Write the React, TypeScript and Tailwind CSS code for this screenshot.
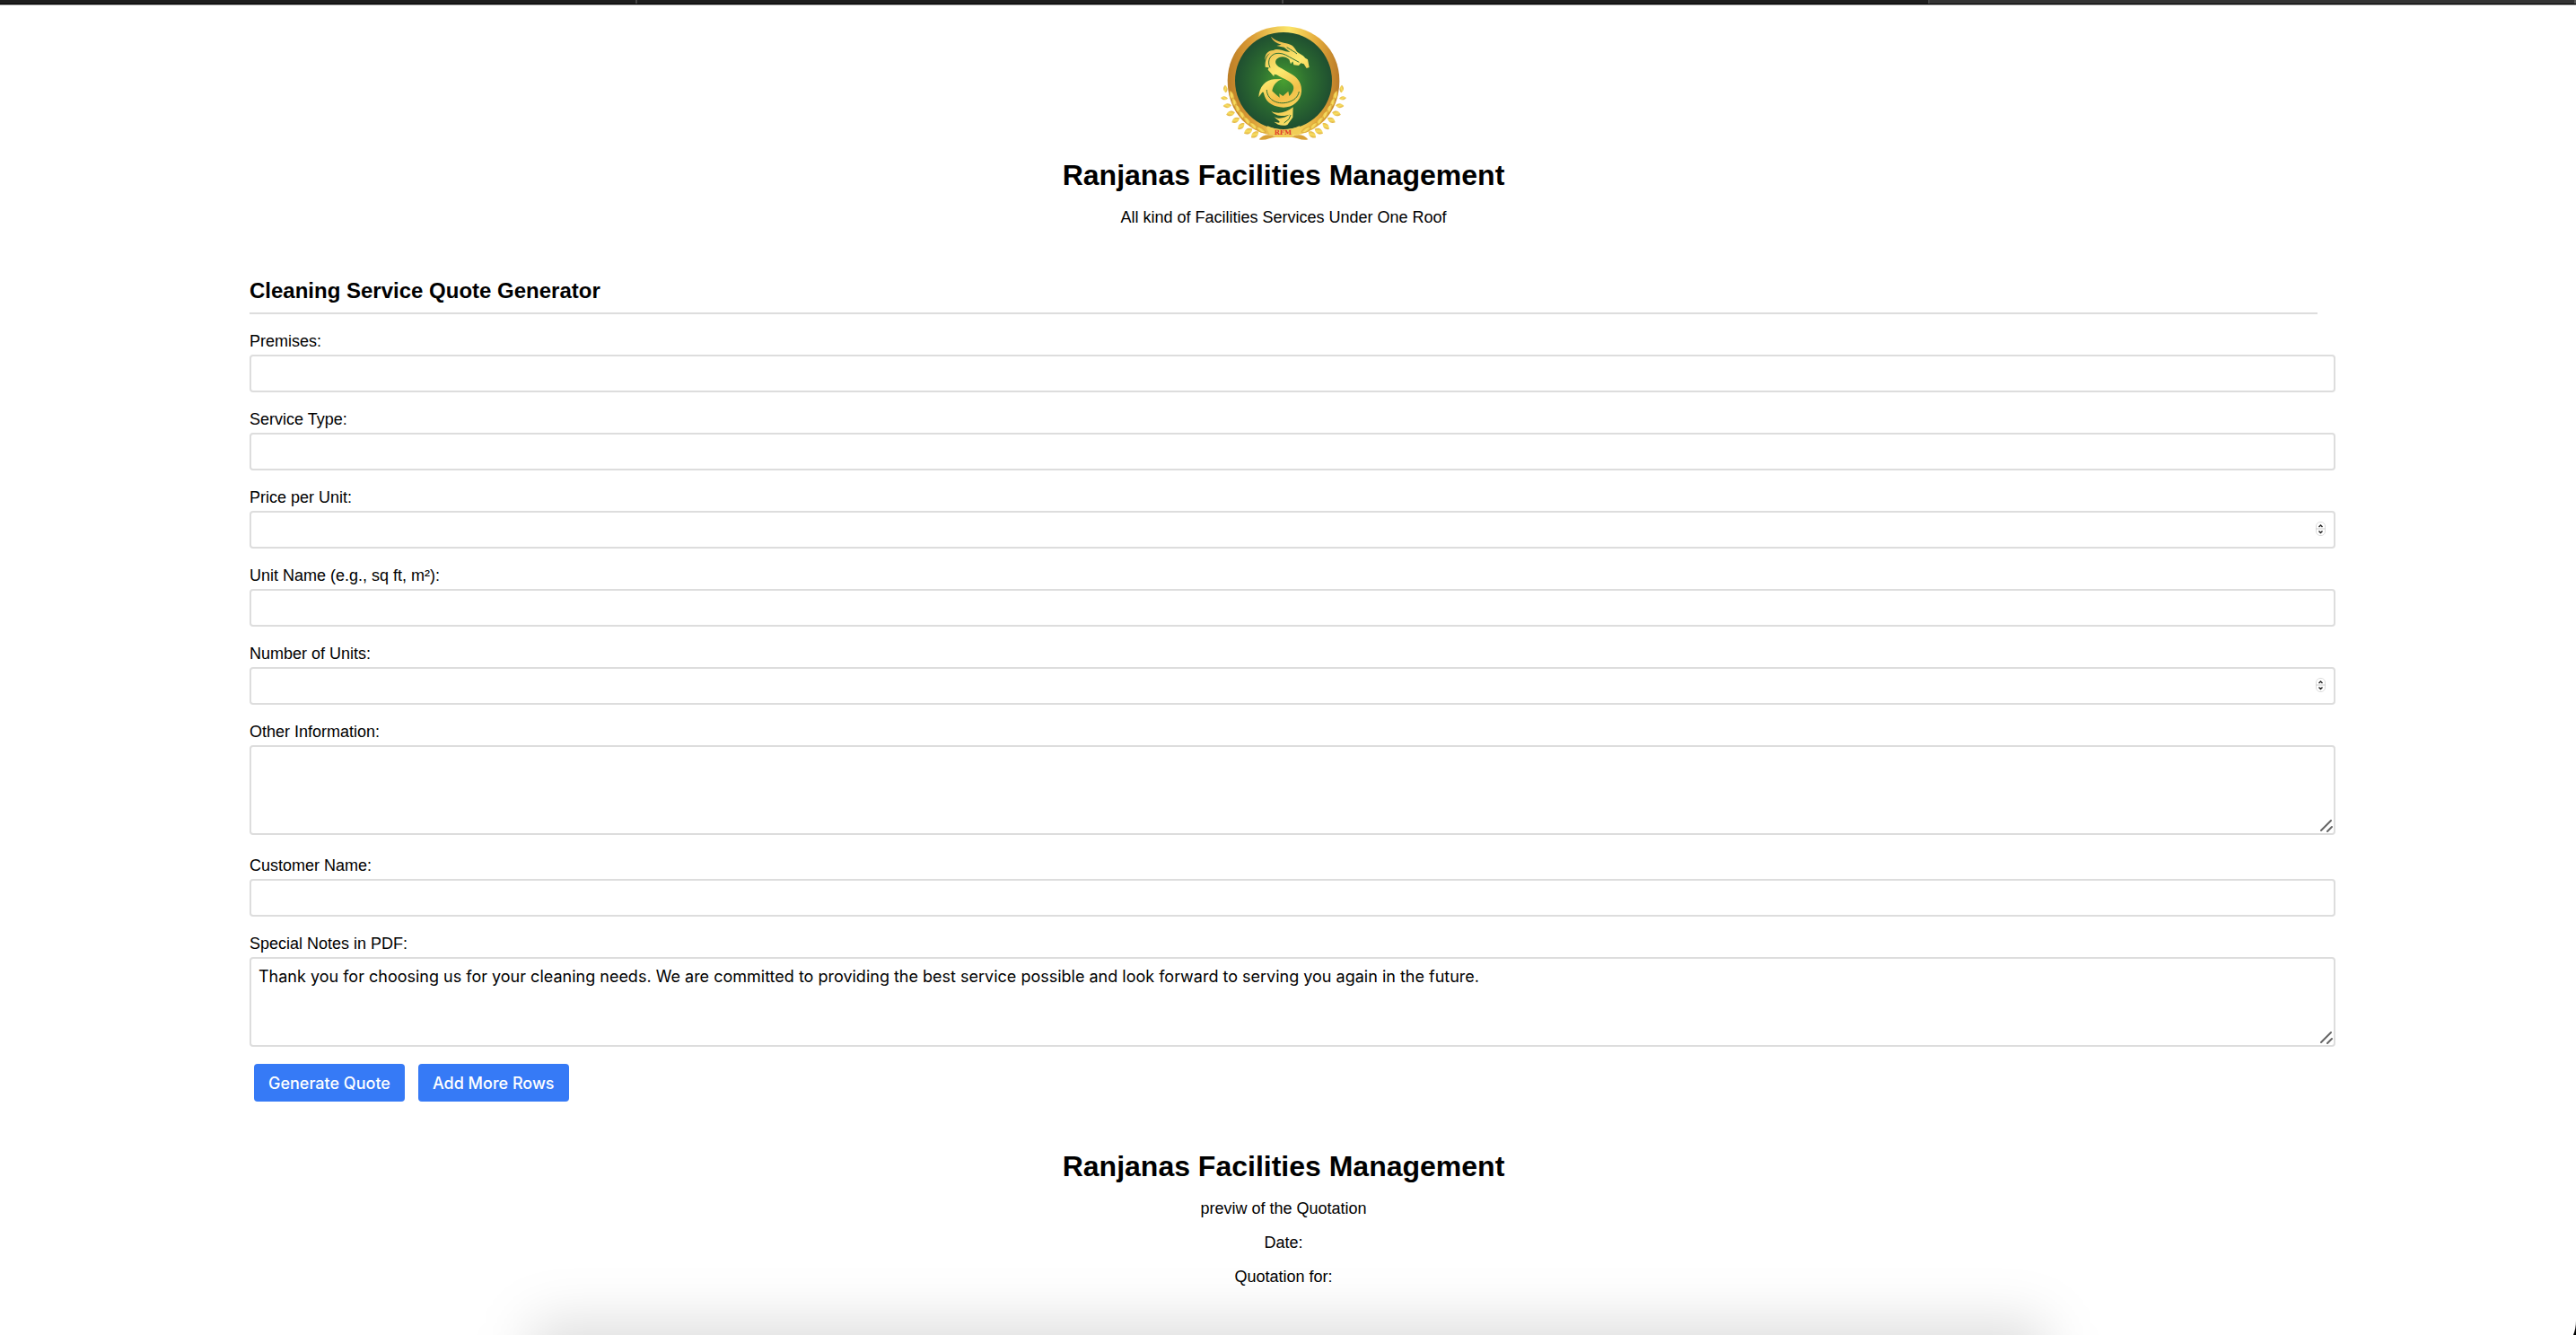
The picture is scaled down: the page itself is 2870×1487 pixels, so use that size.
import React from "react";

const LEAVES: [number, number, number, number][] = [
  [76, 298, 10, -5], [73, 328, 9, -85], [83, 353, 11, -95], [94, 379, 12, -105],
  [111, 401, 12, -120], [129, 421, 12, -135], [153, 438, 13, -120], [175, 449, 13, -130],
];
const INNER: [number, number, number][] = [
  [97, 320, -20], [106, 343, -25], [117, 364, -30], [131, 384, -38], [149, 404, -45], [170, 421, -55], [194, 434, -65],
];

function LaurelHalf() {
  return (
    <g>
      {INNER.map(([x, y, r]) => (
        <path
          key={`${x}-${y}`}
          d="M0 -18C9 -8 9 8 0 18C-9 8 -9 -8 0 -18Z"
          fill="url(#leaf)"
          stroke="#d39a2c"
          strokeWidth="1.5"
          transform={`translate(${x} ${y}) rotate(${r})`}
        />
      ))}
      {LEAVES.map(([x, y, s, r]) => (
        <path
          key={`${x}-${y}`}
          d={`M0 ${-s - 4}C${s} ${-s / 2} ${s - 2} ${s / 2} 0 ${s + 2}C${-s + 2} ${s / 2} ${-s} ${-s / 2} 0 ${-s - 4}Z`}
          fill="url(#leaf)"
          transform={`translate(${x} ${y}) rotate(${r})`}
        />
      ))}
      <path d="M188 466C200 448 225 446 246 458C226 458 208 472 188 466Z" fill="#d9a136" />
    </g>
  );
}

function Logo() {
  return (
    <svg role="img" aria-label="Ranjanas Facilities Management logo" viewBox="60 87 420 387" className="h-[129px] w-[140px]">
      <defs>
        <linearGradient id="ring" x1="0" x2="1" y1="0" y2="0">
          <stop offset="0" stopColor="#bb7d26" />
          <stop offset="0.2" stopColor="#d99a35" />
          <stop offset="0.55" stopColor="#fbe568" />
          <stop offset="0.8" stopColor="#e4ab3b" />
          <stop offset="1" stopColor="#b97a28" />
        </linearGradient>
        <linearGradient id="leaf" x1="0" x2="1" y1="0" y2="1">
          <stop offset="0" stopColor="#d29631" />
          <stop offset="0.5" stopColor="#f8df62" />
          <stop offset="1" stopColor="#d9a035" />
        </linearGradient>
        <linearGradient id="dragon" gradientUnits="userSpaceOnUse" x1="190" y1="130" x2="350" y2="400">
          <stop offset="0" stopColor="#e9a93d" />
          <stop offset="0.4" stopColor="#fcea70" />
          <stop offset="0.65" stopColor="#f2bf48" />
          <stop offset="1" stopColor="#fbe86c" />
        </linearGradient>
        <radialGradient id="field">
          <stop offset="0" stopColor="#489f31" />
          <stop offset="0.5" stopColor="#2e7030" />
          <stop offset="1" stopColor="#1f4f30" />
        </radialGradient>
      </defs>
      <path d="M83 270C83 165 165 88 270 88S457 165 457 270S385 456 270 456S83 375 83 270Z" fill="url(#ring)" />
      <circle cx="270" cy="270" r="162" fill="url(#field)" />
      <LaurelHalf />
      <g transform="translate(540 0) scale(-1 1)">
        <LaurelHalf />
      </g>
      <g fill="url(#dragon)">
        <path d="M228 122C243 138 266 141 287 147C304 152 308 163 316 174L336 187L343 194L351 199L356 225L347 228L338 214L328 211L321 219L304 217L301 205L294 214L289 199C276 186 256 187 246 199C238 210 248 222 264 229L300 250C322 264 332 284 330 306C328 338 300 359 270 359C238 358 214 344 207 322L203 308L199 308L187 325C188 291 210 266 239 265L266 264C247 270 235 285 232 304L244 315L257 326L256 313L268 321L286 305L289 321C302 308 309 292 299 281C287 267 263 261 247 250L239 248L238 256L227 243L218 233L221 226L209 224C208 205 212 188 226 177C215 182 211 190 208 201C207 181 218 168 237 168C245 162 264 166 278 172L292 174L272 158L247 153L263 149C245 144 233 135 228 122Z" />
        <path d="M229 371C250 383 279 376 302 358L301 392L283 417C273 421 263 420 252 416L238 407L254 410C264 408 247 399 238 390C254 400 274 395 292 382C273 391 243 389 229 371Z" />
      </g>
      <g fill="none" stroke="#2b7034" strokeWidth="3">
        <path d="M225 226C212 200 230 176 255 178C272 178 286 189 298 195L322 208" />
        <path d="M281 158C298 169 306 172 315 180" />
        <path d="M214 300C214 328 244 352 284 342C306 335 318 325 322 306" />
        <path d="M294 384L288 398L272 411" />
      </g>
      <path d="M217 421C250 437 290 437 323 421L328 428L315 450L302 448L298 459H242L238 450L224 449L213 429Z" fill="#f1cd58" />
      <text x="268" y="449" textAnchor="middle" fill="#e03a26" className="font-['DejaVu_Serif'] text-[22px] font-bold">RFM</text>
    </svg>
  );
}

function Spinner() {
  return (
    <svg aria-hidden="true" viewBox="0 0 11 16" className="pointer-events-none absolute top-3 right-[11px] h-4 w-[11px]">
      <rect x="0.5" y="0.5" width="10" height="15" rx="4.5" fill="#fff" stroke="#dcdcdc" />
      <path d="M0 8H11" stroke="#cfcfcf" />
      <path d="M3.5 6L5.5 4L7.5 6M3.5 10.5L5.5 12.5L7.5 10.5" fill="none" stroke="#222" strokeWidth="1.4" />
    </svg>
  );
}

function ResizeGrip() {
  return (
    <svg aria-hidden="true" viewBox="0 0 14 14" className="pointer-events-none absolute right-[3px] bottom-[3px] size-[14px]">
      <path d="M1 12L12 1M8 13L13 8" fill="none" stroke="#666" strokeWidth="2" strokeLinecap="round" />
    </svg>
  );
}

type FieldProps = { id: string; label: string; kind?: "text" | "number" | "area"; value?: string };

function Field({ id, label, kind = "text", value }: FieldProps) {
  const box = "block w-full rounded-[4px] border-2 border-[#ddd] bg-white px-2 font-[Inter,sans-serif] text-lg outline-none";
  return (
    <div className={kind === "area" ? "pb-[22px] last:pb-0" : "pb-[18px]"}>
      <label htmlFor={id} className="block pb-[2px] leading-[25px]">{label}</label>
      <div className="relative -mr-5">
        {kind === "area" ? (
          <textarea id={id} defaultValue={value} className={`${box} h-[100px] resize-none py-2 leading-6`} />
        ) : (
          <input
            id={id}
            type={kind}
            className={`${box} h-[42px] [appearance:textfield] [&::-webkit-inner-spin-button]:appearance-none`}
          />
        )}
        {kind === "number" && <Spinner />}
        {kind === "area" && <ResizeGrip />}
      </div>
    </div>
  );
}

function ActionButton({ children }: { children: string }) {
  return (
    <button type="button" className="h-[42px] rounded-[4px] bg-[#367af6] px-4 pt-px font-[Inter,sans-serif] text-lg font-medium text-white">
      {children}
    </button>
  );
}

export default function App() {
  return (
    <div className="relative min-h-screen overflow-hidden bg-white font-['Liberation_Sans',Arial,sans-serif] text-lg text-black">
      <div className="-ml-[10px] flex h-[6px] border-b border-[#aaa] bg-black pb-px">
        <div className="flex-1 border-r-2 border-[#444] bg-[#1e1e1e]" />
        <div className="flex-1 border-r-2 border-[#444] bg-[#1e1e1e]" />
        <div className="flex-1 border-r-2 border-[#444] bg-[#1e1e1e]" />
        <div className="flex-1 border-r-2 border-[#555] bg-[#333]" />
      </div>

      <div className="pr-[288px] pl-[278px]">
        <header className="flex flex-col items-center pt-[23px]">
          <Logo />
          <h1 className="pt-[18px] text-[32px] leading-[38px] font-bold">Ranjanas Facilities Management</h1>
          <p className="pt-4 leading-6">All kind of Facilities Services Under One Roof</p>
        </header>

        <main>
          <h2 className="mt-[56px] border-b-2 border-[#ddd] pb-[10px] text-2xl leading-7 font-bold">Cleaning Service Quote Generator</h2>
          <form className="pt-[18px]" onSubmit={(e) => e.preventDefault()}>
            <div>
              <Field id="premises" label="Premises:" />
              <Field id="service" label="Service Type:" />
              <Field id="price" label="Price per Unit:" kind="number" />
              <Field id="unit" label="Unit Name (e.g., sq ft, m²):" />
              <Field id="count" label="Number of Units:" kind="number" />
              <Field id="other" label="Other Information:" kind="area" />
              <Field id="customer" label="Customer Name:" />
              <Field
                id="notes"
                label="Special Notes in PDF:"
                kind="area"
                value="Thank you for choosing us for your cleaning needs. We are committed to providing the best service possible and look forward to serving you again in the future."
              />
            </div>
            <div className="flex gap-[15px] pt-[19px] pl-[5px]">
              <ActionButton>Generate Quote</ActionButton>
              <ActionButton>Add More Rows</ActionButton>
            </div>
          </form>
        </main>

        <section className="flex flex-col items-center pt-[53px]">
          <h1 className="text-[32px] leading-[38px] font-bold">Ranjanas Facilities Management</h1>
          <div className="flex flex-col items-center gap-[14px] pt-4 leading-6">
            <p>previw of the Quotation</p>
            <p>Date:</p>
            <p>Quotation for:</p>
          </div>
        </section>
      </div>

      {/* Soft shadow rising from the bottom edge */}
      <div aria-hidden="true" className="pointer-events-none absolute inset-x-0 bottom-0 h-4 px-[590px]">
        <div className="h-[200px] rounded-[20px] bg-black/13 blur-[30px]" />
      </div>
      {/* Rounded window corner */}
      <svg aria-hidden="true" viewBox="0 0 4 16" className="absolute right-0 bottom-0 h-4 w-1">
        <path d="M4 0V16H1C3 11 4 6 4 0Z" fill="#000" />
      </svg>
    </div>
  );
}
